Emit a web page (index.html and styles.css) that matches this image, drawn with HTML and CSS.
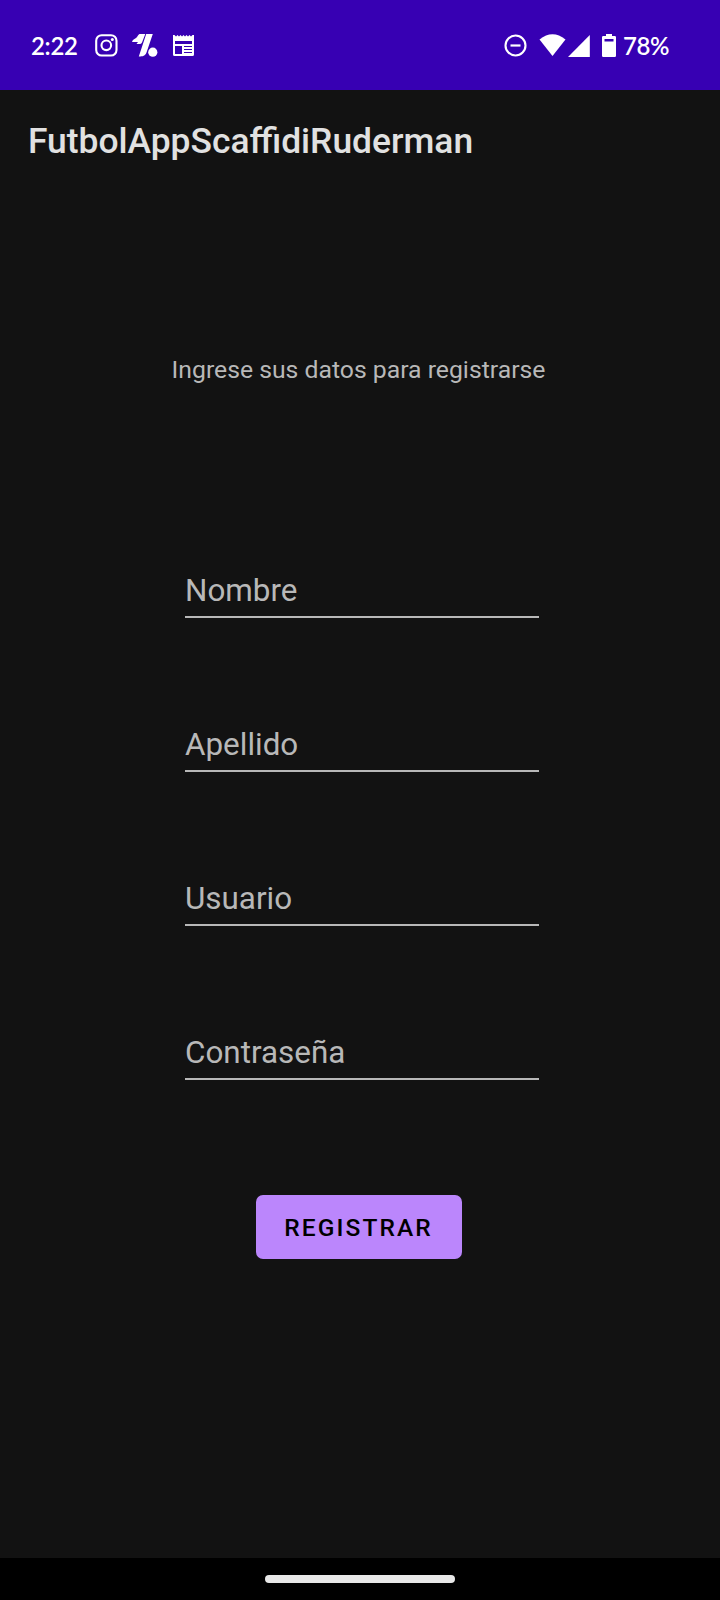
FILE: index.html
```
<!DOCTYPE html>
<html lang="es">
<head>
<meta charset="utf-8">
<title>FutbolAppScaffidiRuderman</title>
<link rel="stylesheet" href="styles.css">
</head>
<body>
<div class="screen">
  <header class="status">
    <span class="clock">2:22</span>
    <svg class="icon instagram" width="23" height="23" viewBox="0 0 23 23"><rect x="1.2" y="1.2" width="20.3" height="20.3" rx="5.5" fill="none" stroke="#fff" stroke-width="2.1"/><circle cx="11.3" cy="11.3" r="4.8" fill="none" stroke="#fff" stroke-width="2.1"/><circle cx="17.3" cy="5.6" r="1.5" fill="#fff"/></svg>
    <svg class="icon brand" width="26" height="23" viewBox="0 0 26 23"><path d="M7.500 0H13.300L10 8.500Q9.300 10 7.500 10H4.500L6 8H0C.5 5.500 2.500 5 4 4 5.700 2.800 6 .5 7.500 0zM14.200 0H20.800L14.500 18.500C13.200 22 11 22.500 6.800 22.500z" fill="#fff"/><circle cx="20.800" cy="18.200" r="4.600" fill="#fff"/></svg>
    <svg class="icon news" width="23" height="22" viewBox="0 0 23 22"><path d="M1 0H2.500L4 1.500 5.500 0 7 1.500 8.500 0 10 1.500 11.500 0 13 1.500 14.500 0 16 1.500 17.500 0 19 1.500 20.500 0H22V19.500Q22 21 20.500 21H2.500Q1 21 1 19.500zM3 6V9H20V6zM3 11V19H10V11zM12 11V12H20V11zM12 14V15H20V14zM12 17V18H20V17z" fill="#fff" fill-rule="evenodd"/></svg>
    <span class="spacer"></span>
    <svg class="icon dnd" width="23" height="23" viewBox="0 0 23 23"><circle cx="11.500" cy="11.500" r="10" fill="none" stroke="#fff" stroke-width="2.100"/><path d="M6.500 11.500h10" stroke="#fff" stroke-width="2.200"/></svg>
    <svg class="icon wifi" width="27" height="23" viewBox="0 0 27 23"><path d="M.5 5.500Q13.500-5 26.500 5.500L13.500 22z" fill="#fff"/></svg>
    <svg class="icon signal" width="22" height="22" viewBox="0 0 22 22"><path d="M21.800 0v22H0z" fill="#fff"/></svg>
    <svg class="icon battery" width="14" height="23" viewBox="0 0 14 23"><path d="M4 0H10V2H12.800Q14 2 14 3.200V21.800Q14 23 12.800 23H1.200Q0 23 0 21.800V3.200Q0 2 1.200 2H4zM2.500 5V7.500H11.500V5z" fill="#fff" fill-rule="evenodd"/></svg>
    <span class="percent">78%</span>
  </header>
  <h1 class="title">FutbolAppScaffidiRuderman</h1>
  <main class="content">
    <p class="intro">Ingrese sus datos para registrarse</p>
    <form class="form">
      <input class="field" type="text" placeholder="Nombre">
      <input class="field" type="text" placeholder="Apellido">
      <input class="field" type="text" placeholder="Usuario">
      <input class="field" type="text" placeholder="Contraseña">
      <button class="submit" type="button">REGISTRAR</button>
    </form>
  </main>
  <footer class="navbar"><div class="handle"></div></footer>
</div>
</body>
</html>
```
FILE: styles.css
```
* { box-sizing: border-box; }
body { margin: 0; background: #121212; font-family: Roboto, sans-serif; }
.screen { width: 720px; height: 1600px; display: flex; flex-direction: column; }
.status { height: 90px; padding: 1px 0 0 31px; background: #3700b3; color: #fff; display: flex; align-items: center; font-family: Lato, sans-serif; font-size: 24px; font-weight: 600; }
.clock { width: 64px; padding-bottom: 1px; letter-spacing: -0.3px; }
.percent { width: 97px; padding-bottom: 1px; letter-spacing: -0.4px; }
.spacer { flex: 1; }
.icon { display: block; flex: none; }
.brand { margin-left: 14px; }
.news { margin-left: 14px; }
.wifi { margin-left: 12px; }
.signal { margin-left: 2px; }
.battery { margin: 0 7px 0 12px; }
.title { margin: 0; height: 102px; padding: 1px 0 0 28px; line-height: 100px; font-size: 35.4px; font-weight: 500; color: #e1e1e1; }
.content { flex: 1; padding-right: 3px; display: flex; flex-direction: column; align-items: center; }
.intro { margin: 163px 0 0; line-height: 30px; font-size: 24.75px; color: #b8b8b8; }
.form { margin-top: 173px; display: flex; flex-direction: column; align-items: center; }
.field { width: 354px; height: 60px; margin: 0 0 94px 7px; padding: 7px 0 0; border: 0; border-bottom: 2px solid #b8b8b8; background: none; font: 31.4px Roboto, sans-serif; color: #fff; }
.field::placeholder { color: #b8b8b8; opacity: 1; }
.submit { width: 206px; height: 64px; margin-top: 21px; padding: 1px 0 0; border: 0; border-radius: 7px; background: #bb86fc; font: 500 24.5px Roboto, sans-serif; letter-spacing: 2.1px; color: #000; }
.navbar { height: 42px; background: #000; display: flex; justify-content: center; align-items: center; }
.handle { width: 190px; height: 8px; border-radius: 4px; background: #e8e8e8; }
```
